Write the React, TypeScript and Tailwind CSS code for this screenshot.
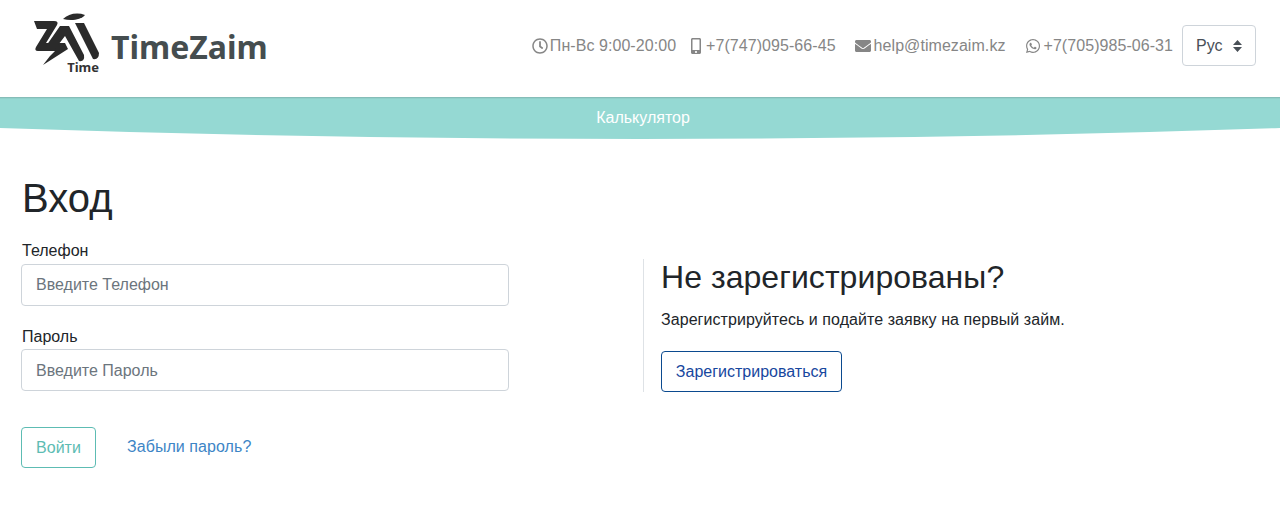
import { FaRegClock, FaMobileAlt, FaEnvelope, FaWhatsapp } from "react-icons/fa";

function Logo() {
  return (
    <div className="relative w-[66px] h-[62px] shrink-0">
      <svg width="66" height="62" viewBox="0 0 66 62" fill="#2b2b2b">
        <path d="M30 7C35 2 44 0 52 3 48 8 38 9 30 7z" />
        <path d="M1 9H21Q26 9 24 13L13 31H32L35 37 10 53 17 44 22 39H5Q1 39 3 35L14 17H4Z" />
        <path d="M27 14H36L51 43Q52 50 46 49L32 24 22 37H11Z" />
        <path d="M42 11H51L66 41Q66 48 60 47Z" />
      </svg>
      <span className="absolute right-0 bottom-0 text-[13px] leading-none font-bold text-[#333] font-['Noto_Sans',sans-serif]">Time</span>
    </div>
  );
}

function Contact({ icon, text, className }: { icon: React.ReactNode; text: string; className: string }) {
  return (
    <span className={`flex items-center mt-px tracking-[0.06px] ${className}`}>
      {icon}
      {text}
    </span>
  );
}

function Field({ label, placeholder, labelClass, inputClass }: { label: string; placeholder: string; labelClass: string; inputClass: string }) {
  return (
    <div>
      <label className={`block ml-px leading-6 ${labelClass}`}>{label}</label>
      <input
        placeholder={placeholder}
        className={`block w-full h-[42px] px-[14px] bg-white border border-[#ced4da] rounded-[4px] outline-none placeholder:text-[#6c757d] ${inputClass}`}
      />
    </div>
  );
}

export default function App() {
  return (
    <div className="h-[509px] bg-white text-[#212529] text-base font-['Liberation_Sans',Arial,sans-serif] overflow-hidden">
      {/* Header */}
      <header className="h-[97px] flex items-start justify-between pl-[33px] pr-6">
        <div className="flex items-center gap-[12px] mt-3">
          <Logo />
          <span className="text-[32px] leading-none font-bold text-[#454d4f] font-['Noto_Sans',sans-serif] mt-2">TimeZaim</span>
        </div>
        <div className="flex items-center text-[#868686] mt-[25px]">
          <Contact icon={<FaRegClock size={16} />} text="Пн-Вс 9:00-20:00" className="gap-[2px] mr-3" />
          <Contact icon={<FaMobileAlt size={16} />} text="+7(747)095-66-45" className="gap-[2px] mr-[19px]" />
          <Contact icon={<FaEnvelope size={16} />} text="help@timezaim.kz" className="gap-[3px] mr-[19px]" />
          <Contact icon={<FaWhatsapp size={16} />} text="+7(705)985-06-31" className="gap-[3px] mr-[9px]" />
          <button className="flex items-center gap-[10px] w-[74px] h-[41px] px-[13px] border border-[#ced4da] rounded-[4px] text-[#495057]">
            Рус
            <svg width="9" height="12" viewBox="0 0 9 12" fill="#495057">
              <path d="M4.5 0 9 5H0zM0 7h9l-4.5 5z" />
            </svg>
          </button>
        </div>
      </header>

      {/* Nav band */}
      <nav className="relative h-[42px]">
        <svg className="absolute inset-0 w-full h-full" viewBox="0 0 1280 42" preserveAspectRatio="none">
          <path d="M0 0H1280V31Q640 53 0 31Z" fill="#95d9d3" />
          <rect width="1280" height="1" fill="#85bdb8" />
          <rect y="1" width="1280" height="1" fill="#90d0ca" />
        </svg>
        <div className="relative flex justify-center pt-[11px] ml-[6px] text-white leading-5">Калькулятор</div>
      </nav>

      {/* Login */}
      <main className="pt-[35px] px-[21px]">
        <h1 className="ml-px text-[40px] leading-[48px] mb-[17px]">Вход</h1>
        <div className="flex items-start">
          <div className="w-[488px] flex flex-col gap-[19px]">
            <Field label="Телефон" placeholder="Введите Телефон" labelClass="mb-px" inputClass="" />
            <Field label="Пароль" placeholder="Введите Пароль" labelClass="" inputClass="pt-px" />
          </div>
          <div className="ml-[134px] mt-5 h-[133px] border-l border-[#dee2e6] pl-[17px]">
            <h2 className="text-[32px] leading-[38px] mt-[-1px] mb-3 tracking-[0.05px]">Не зарегистрированы?</h2>
            <p className="leading-6 mb-[19px] tracking-[0.06px]">Зарегистрируйтесь и подайте заявку на первый займ.</p>
            <button className="h-[41px] w-[181px] border border-[#0b4a8f] rounded-[4px] text-[#17479e]">Зарегистрироваться</button>
          </div>
        </div>
        <div className="flex items-center mt-[35px]">
          <button className="h-[41px] w-[75px] border border-[#5dbcb3] rounded-[4px] text-[#5dbcb3]">Войти</button>
          <a className="ml-[31px] mt-[-2px] text-[#3d85c6] tracking-[0.06px]">Забыли пароль?</a>
        </div>
      </main>
    </div>
  );
}
